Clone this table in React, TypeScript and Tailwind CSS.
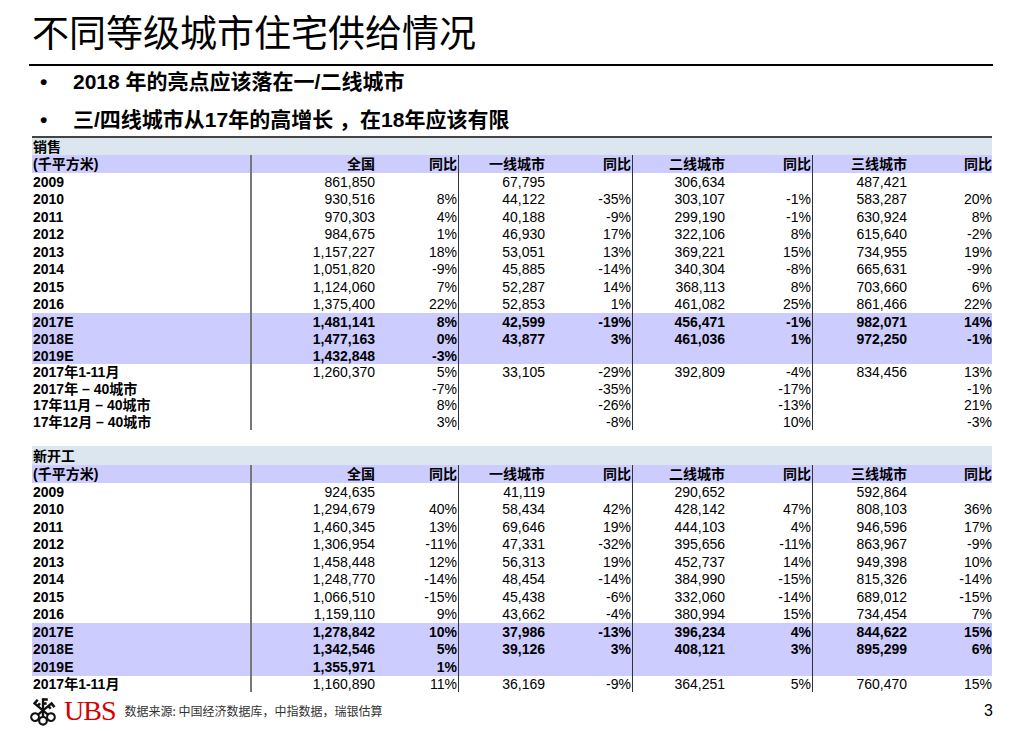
import React from 'react';

type Vals = string[];

const GRID = 'grid grid-cols-[220px_125px_82px_88px_86px_94px_86px_96px_83px] w-[960px]';

const cellCls = [
  'flex items-center justify-end pr-[2px]',
  'flex items-center justify-end pr-[1px] border-r border-[#333]',
  'flex items-center justify-end pr-[2px]',
  'flex items-center justify-end pr-[1px] border-r border-[#333]',
  'flex items-center justify-end pr-[2px]',
  'flex items-center justify-end pr-[1px] border-r border-[#333]',
  'flex items-center justify-end pr-[2px]',
  'flex items-center justify-end pr-0',
];

function Row({ label, v, h, bold, hl }: { label: string; v: Vals; h: string; bold?: boolean; hl?: boolean }) {
  return (
    <div className={`${GRID} ${h} ${hl ? 'bg-[#ccccff]' : ''} ${bold ? 'font-bold' : ''}`}>
      <div className="flex items-center pl-[1px] font-bold border-r-2 border-[#777] whitespace-nowrap">{label}</div>
      {cellCls.map((c, i) => (
        <div key={i} className={c}>
          {v[i] ?? ''}
        </div>
      ))}
    </div>
  );
}

const header: Vals = ['全国', '同比', '一线城市', '同比', '二线城市', '同比', '三线城市', '同比'];

const sales: [string, Vals][] = [
  ['2009', ['861,850', '', '67,795', '', '306,634', '', '487,421', '']],
  ['2010', ['930,516', '8%', '44,122', '-35%', '303,107', '-1%', '583,287', '20%']],
  ['2011', ['970,303', '4%', '40,188', '-9%', '299,190', '-1%', '630,924', '8%']],
  ['2012', ['984,675', '1%', '46,930', '17%', '322,106', '8%', '615,640', '-2%']],
  ['2013', ['1,157,227', '18%', '53,051', '13%', '369,221', '15%', '734,955', '19%']],
  ['2014', ['1,051,820', '-9%', '45,885', '-14%', '340,304', '-8%', '665,631', '-9%']],
  ['2015', ['1,124,060', '7%', '52,287', '14%', '368,113', '8%', '703,660', '6%']],
  ['2016', ['1,375,400', '22%', '52,853', '1%', '461,082', '25%', '861,466', '22%']],
];
const salesE: [string, Vals][] = [
  ['2017E', ['1,481,141', '8%', '42,599', '-19%', '456,471', '-1%', '982,071', '14%']],
  ['2018E', ['1,477,163', '0%', '43,877', '3%', '461,036', '1%', '972,250', '-1%']],
  ['2019E', ['1,432,848', '-3%', '', '', '', '', '', '']],
];
const salesTail: [string, Vals][] = [
  ['2017年1-11月', ['1,260,370', '5%', '33,105', '-29%', '392,809', '-4%', '834,456', '13%']],
  ['2017年 – 40城市', ['', '-7%', '', '-35%', '', '-17%', '', '-1%']],
  ['17年11月 – 40城市', ['', '8%', '', '-26%', '', '-13%', '', '21%']],
  ['17年12月 – 40城市', ['', '3%', '', '-8%', '', '10%', '', '-3%']],
];

const starts: [string, Vals][] = [
  ['2009', ['924,635', '', '41,119', '', '290,652', '', '592,864', '']],
  ['2010', ['1,294,679', '40%', '58,434', '42%', '428,142', '47%', '808,103', '36%']],
  ['2011', ['1,460,345', '13%', '69,646', '19%', '444,103', '4%', '946,596', '17%']],
  ['2012', ['1,306,954', '-11%', '47,331', '-32%', '395,656', '-11%', '863,967', '-9%']],
  ['2013', ['1,458,448', '12%', '56,313', '19%', '452,737', '14%', '949,398', '10%']],
  ['2014', ['1,248,770', '-14%', '48,454', '-14%', '384,990', '-15%', '815,326', '-14%']],
  ['2015', ['1,066,510', '-15%', '45,438', '-6%', '332,060', '-14%', '689,012', '-15%']],
  ['2016', ['1,159,110', '9%', '43,662', '-4%', '380,994', '15%', '734,454', '7%']],
];
const startsE: [string, Vals][] = [
  ['2017E', ['1,278,842', '10%', '37,986', '-13%', '396,234', '4%', '844,622', '15%']],
  ['2018E', ['1,342,546', '5%', '39,126', '3%', '408,121', '3%', '895,299', '6%']],
  ['2019E', ['1,355,971', '1%', '', '', '', '', '', '']],
];

// UBS three-keys emblem
function Keys() {
  const key = (
    <g>
      <line x1="15" y1="2" x2="15" y2="19.5" stroke="#111" strokeWidth="2.2" />
      <circle cx="15" cy="23.2" r="3.6" fill="none" stroke="#111" strokeWidth="2" />
      <rect x="15" y="2" width="4.5" height="2.4" fill="#111" />
      <rect x="15" y="5.8" width="3.4" height="2.4" fill="#111" />
    </g>
  );
  return (
    <svg width="32" height="30" viewBox="0 0 30 28">
      {key}
      <g transform="rotate(-50 15 13.5)">{key}</g>
      <g transform="rotate(50 15 13.5)">{key}</g>
    </svg>
  );
}

export default function App() {
  return (
    <div className="w-[1023px] h-[731px] bg-white text-black overflow-hidden font-['Liberation_Sans','Noto_Sans_CJK_SC',sans-serif]">
      <h1 className="pt-[17px] pl-[32px] text-[37px] leading-[36px] font-normal">不同等级城市住宅供给情况</h1>
      <div className="mt-[11px] ml-[29px] w-[964px] h-[2px] bg-black" />

      <div className="mt-[4px] pl-[40px] flex items-center h-[24px] text-[21px] font-bold">
        <span className="w-[33px]">•</span>
        <span>2018 年的亮点应该落在一/二线城市</span>
      </div>
      <div className="mt-[14px] pl-[40px] flex items-center h-[24px] text-[21px] font-bold">
        <span className="w-[33px]">•</span>
        <span>三/四线城市从17年的高增长 ，在18年应该有限</span>
      </div>

      <div className="mt-[4px] ml-[32px] text-[14px] leading-none">
        <div className="h-[19px] w-[960px] border-t-2 border-[#444] bg-[#dce6ef] flex items-center pl-[1px] font-bold">销售</div>
        <Row label="(千平方米)" v={header} h="h-[18px]" bold hl />
        {sales.map(([l, v]) => (
          <Row key={l} label={l} v={v} h="h-[17.5px]" />
        ))}
        {salesE.map(([l, v]) => (
          <Row key={l} label={l} v={v} h="h-[17px]" bold hl />
        ))}
        {salesTail.map(([l, v]) => (
          <Row key={l} label={l} v={v} h="h-[16.5px]" />
        ))}

        <div className="mt-[16px] h-[19px] w-[960px] bg-[#dce6ef] flex items-center pl-[1px] font-bold">新开工</div>
        <Row label="(千平方米)" v={header} h="h-[18px]" bold hl />
        {starts.map(([l, v]) => (
          <Row key={l} label={l} v={v} h="h-[17.5px]" />
        ))}
        {startsE.map(([l, v]) => (
          <Row key={l} label={l} v={v} h="h-[17.5px]" bold hl />
        ))}
        <Row label="2017年1-11月" v={['1,160,890', '11%', '36,169', '-9%', '364,251', '5%', '760,470', '15%']} h="h-[16px]" />
      </div>

      <div className="mt-[4px] ml-[27px] w-[966px] flex items-center h-[30px]">
        <Keys />
        <span className="ml-[5px] text-[28px] leading-none tracking-[-1px] text-[#d40000] font-['Liberation_Serif',serif]">UBS</span>
        <span className="ml-[9px] text-[12px] text-[#333] font-['Noto_Sans_CJK_SC',sans-serif]">数据来源: 中国经济数据库，中指数据，瑞银估算</span>
        <span className="ml-auto text-[16px]">3</span>
      </div>
    </div>
  );
}
